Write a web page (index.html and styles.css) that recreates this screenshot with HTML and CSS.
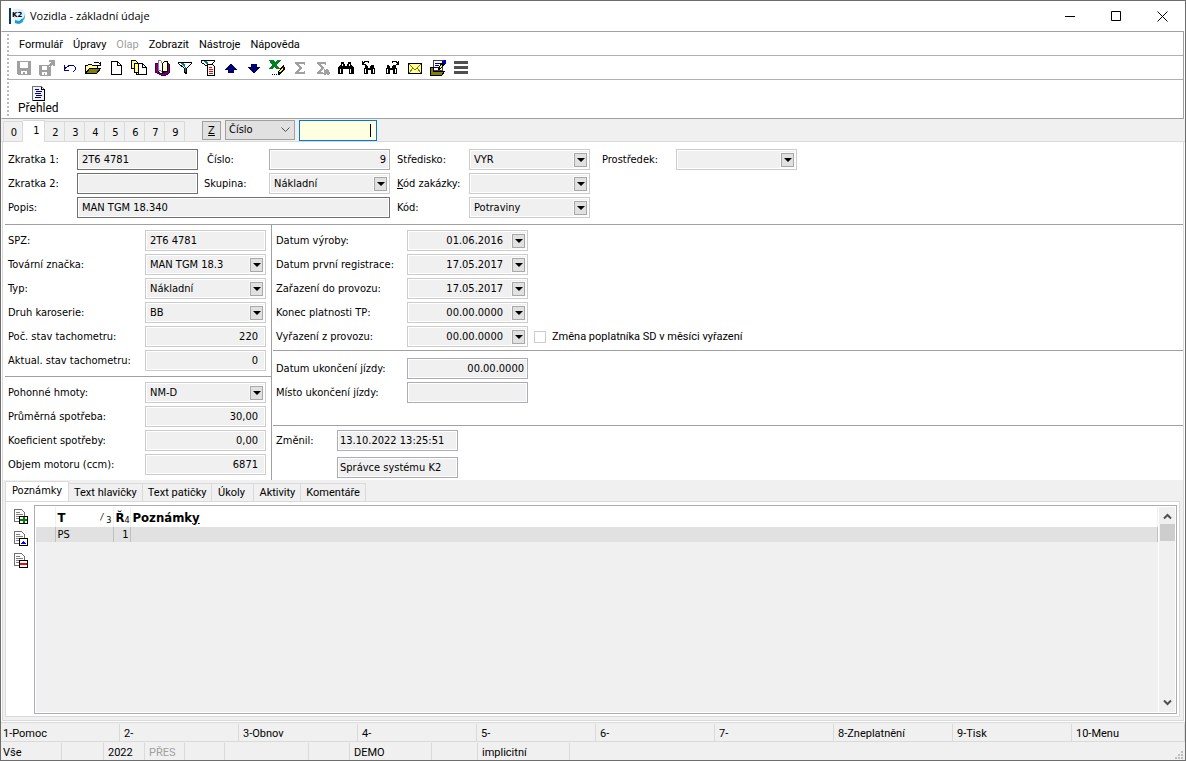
FILE: index.html
```html
<!DOCTYPE html>
<html lang="cs">
<head>
<meta charset="utf-8">
<title>Vozidla - základní údaje</title>
<link rel="stylesheet" href="styles.css">
</head>
<body>
<div class="window">
  <header class="titlebar">
    <svg class="app-icon" width="18" height="18" viewBox="0 0 18 18" aria-hidden="true">
      <path d="M4 2h9l3 4v7l-4 4H5z" fill="#dff1fb"/>
      <path d="M16 6c1 5-2 10-9 11 4-1 5-3 5-5 2 0 4-2 4-6z" fill="#18a8e0"/>
      <path d="M6 13l4 1 3-2 1 3-4 2-4-1z" fill="#1d9fd0"/>
      <path d="M0 1h2v16H0z" fill="#003a70"/>
      <text x="3" y="10" class="app-mark">K2</text>
    </svg>
    <h1 class="title">Vozidla - základní údaje</h1>
    <div class="window-buttons">
      <button type="button" aria-label="Minimalizovat"><svg width="11" height="11" viewBox="0 0 11 11"><path d="M0 5.500h10" stroke="#000"/></svg></button>
      <button type="button" aria-label="Maximalizovat"><svg width="11" height="11" viewBox="0 0 11 11"><path d="M.5.500h9v9h-9z" fill="none" stroke="#000"/></svg></button>
      <button type="button" aria-label="Zavřít"><svg width="11" height="11" viewBox="0 0 11 11"><path d="M.5.500l10 10M10.500.500l-10 10" stroke="#000"/></svg></button>
    </div>
  </header>

  <div class="bars">
    <nav class="bar menubar">
      <button type="button">Formulář</button>
      <button type="button">Úpravy</button>
      <button type="button" disabled>Olap</button>
      <button type="button">Zobrazit</button>
      <button type="button">Nástroje</button>
      <button type="button">Nápověda</button>
    </nav>
    <div class="bar toolbar">
      <button type="button" aria-label="Uložit" disabled><svg viewBox="0 0 16 16"><path d="M1 1h14v14H2l-1-1z" fill="#a0a0a0"/><path d="M4 2h8v6H4zM5 11h6v3H9v-2H7v2H5z" fill="#fff"/></svg></button>
      <button type="button" aria-label="Uložit jako" disabled><svg viewBox="0 0 16 16"><path d="M0 5h10v2h2v9H1l-1-1z" fill="#a0a0a0"/><path d="M3 6h5v4H3zM3 12h5v3H6v-2H5v2H3z" fill="#fff"/><path d="M10 0h6v6h-2V4l-3 3-2-2 3-3h-2z" fill="#a0a0a0"/></svg></button>
      <button type="button" aria-label="Zpět"><svg viewBox="0 0 16 16"><path d="M2 5v5h5M2 9l3-2 3-2h3l2 2v3l-2 2" fill="none" stroke="#000080"/></svg></button>
      <button type="button" aria-label="Otevřít"><svg viewBox="0 0 16 16"><path d="M9 3l2-1h2l2 2M15 2v3h-3" fill="none" stroke="#000"/><path d="M.5 13.500v-8h2l1-1h3l1 1h5v3" fill="#ffffa0" stroke="#000"/><path d="M.5 13.500l4-5h11l-4 5z" fill="#808000" stroke="#000"/></svg></button>
      <button type="button" aria-label="Nový"><svg viewBox="0 0 16 16"><path d="M3.500 1.500h6l4 4v9h-10z" fill="#fff" stroke="#000"/><path d="M9.500 1.500v4h4" fill="none" stroke="#000"/></svg></button>
      <button type="button" aria-label="Kopírovat"><svg viewBox="0 0 16 16"><path d="M.5.500h4l2 2v6h-6z" fill="#ffff80" stroke="#000"/><path d="M3.500 3.500h4l2 2v7h-6z" fill="#ffff80" stroke="#000"/><path d="M5.500 12.500v2h3" fill="none" stroke="#000"/><path d="M7.500 3.500h4l4 4v7h-8z" fill="#fff" stroke="#000"/><path d="M11.500 3.500v4h4" fill="none" stroke="#000"/></svg></button>
      <button type="button" aria-label="Kniha"><svg viewBox="0 0 16 16"><path d="M1 3h3v9l4 2 4-2 2-9 1 1v9l-3 2H7l-6-3z" fill="#800080" stroke="#400040"/><path d="M4.500.500l2 0 2 3v9l-2-2h-2z" fill="#fff" stroke="#808080"/><path d="M8.500 3.500l2-2h3v10h-3l-2 1z" fill="#ffffd0" stroke="#000"/></svg></button>
      <button type="button" aria-label="Filtr"><svg viewBox="0 0 16 16"><path d="M1.500 2.500h13v1l-5 5v5l-2-1v-4l-6-5z" fill="#fff" stroke="#000"/><path d="M3 3h4l2 5v4H8V8z" fill="#008080"/></svg></button>
      <button type="button" aria-label="Filtr dokladu"><svg viewBox="0 0 16 16"><path d="M1.500.500h13v1l-5 5v6l-2-1v-5l-6-4z" fill="#fff" stroke="#000"/><path d="M3 1h4l2 5v4H8V6z" fill="#008080"/><path d="M7.500 4.500h5l2 2v9h-7z" fill="#fff" stroke="#000"/><path d="M9 7h3v1H9zM9 9h4v1H9zM9 11h4v1H9zM9 13h4v1H9z" fill="#f00"/></svg></button>
      <button type="button" aria-label="Předchozí"><svg viewBox="0 0 16 16"><path d="M8 4l7 6h-4v3H5v-3H1z" fill="#000070"/></svg></button>
      <button type="button" aria-label="Další"><svg viewBox="0 0 16 16"><path d="M8 13l7-6h-4V4H5v3H1z" fill="#000070"/></svg></button>
      <button type="button" aria-label="Export do Excelu"><svg viewBox="0 0 16 16"><path d="M0 0h4l2 2 3-2h3L8 5l3 4H7L5 7 3 9H0l3-4z" fill="#008020"/><path d="M15 5l1 4-5 6H9v-3l4-6z" fill="#000"/><path d="M13 8l1 1-3 4-1-1z" fill="#ff0"/><path d="M14 6l1 2-1 0-1-1z" fill="#c00"/><path d="M3 14h1v1H3zM5 14h1v1H5zM7 14h1v1H7z" fill="#000"/></svg></button>
      <button type="button" aria-label="Součet" disabled><svg viewBox="0 0 16 16"><path d="M3 2h10v3h-1l-1-1H6l4 4-4 4h5l1-1h1v3H3v-2l4-4-4-4z" fill="#a0a0a0"/></svg></button>
      <button type="button" aria-label="Součet označených" disabled><svg viewBox="0 0 16 16"><path d="M2 2h9v3h-1L9 4H5l4 4-4 4h3v2H2v-2l4-4-4-4z" fill="#a0a0a0"/><path d="M9 9h1v1l2-2 1 2h1v2l1 1-1 1v1h-2l-1-1-1 1H9l-1-2 1-1z" fill="#a0a0a0"/></svg></button>
      <button type="button" aria-label="Hledat"><svg viewBox="0 0 16 16"><path d="M3 2h3v2h1v2h2V4h1V2h3v2l3 4v6h-5V9H5v5H0V8l3-4z"/><path d="M4 4h1v2H4zM2 9h1v4H2zM11 4h1v2h-1zM12 9h1v4h-1z" fill="#fff"/></svg></button>
      <button type="button" aria-label="Hledat předchozí"><svg viewBox="0 0 16 16"><path d="M4 5h2v1h1v2h2V6h1V5h3v2l1 2v5h-4v-4H7v4H3V9l1-2z"/><path d="M4 9h1v4H4zM12 9h1v4h-1z" fill="#fff"/><path d="M1.500 1v3h3M2 3.500l2-2h3l1 1" fill="none" stroke="#000"/></svg></button>
      <button type="button" aria-label="Hledat další"><svg viewBox="0 0 16 16"><path d="M3 5h2v1h1v2h2V6h1V5h3v2l1 2v5H9v-4H6v4H2V9l1-2z"/><path d="M3 9h1v4H3zM11 9h1v4h-1z" fill="#fff"/><path d="M14.500 1v3h-3M14 3.500l-2-2H9l-1 1" fill="none" stroke="#000"/></svg></button>
      <button type="button" aria-label="Pošta"><svg viewBox="0 0 16 16"><path d="M1.500 3.500h13v10h-13z" fill="#ffffa0" stroke="#000"/><path d="M2 4l6 6 6-6M2 13l4-5M14 13l-4-5" fill="none" stroke="#808000"/></svg></button>
      <button type="button" aria-label="Úpravy dokladu"><svg viewBox="0 0 16 16"><path d="M3.500.500h9v10h-9z" fill="#fff" stroke="#404040"/><path d="M5 3h6v1H5zM5 5h4v1H5zM4 7h5v1H4z" fill="#0000a0"/><path d="M.5 15.500v-8h3v4h9l2 0-3 4z" fill="#808000" stroke="#000"/><path d="M13 0h3v3l-5 6-3 1 1-3z" fill="#000"/><path d="M13 0h3v3l-1 1-3-2z" fill="#0000d0"/><path d="M11 5l1 1-2 2-1-1z" fill="#ff0"/></svg></button>
      <button type="button" aria-label="Nabídka"><svg viewBox="0 0 16 16"><path d="M1 1h14v3H1zM1 6h14v3H1zM1 11h14v3H1z" fill="#505050"/></svg></button>
    </div>
    <div class="bar viewbar">
      <button type="button" class="overview">
        <svg viewBox="0 0 16 16"><path d="M2.500.500h9l3 3v11h-12z" fill="#f0f0f0" stroke="#707070"/><path d="M11.500.500v3h3v11h-12" fill="none" stroke="#000"/><path d="M5 3h4v1H5zM6 5h6v1H6zM5 7h6v1H5zM6 9h6v1H6zM5 11h6v1H5z" fill="#000080"/></svg>
        <span>Přehled</span>
      </button>
    </div>
  </div>

  <div class="pages">
    <div class="page-tabs" role="tablist">
      <button type="button" role="tab">0</button>
      <button type="button" role="tab" aria-selected="true">1</button>
      <button type="button" role="tab">2</button>
      <button type="button" role="tab">3</button>
      <button type="button" role="tab">4</button>
      <button type="button" role="tab">5</button>
      <button type="button" role="tab">6</button>
      <button type="button" role="tab">7</button>
      <button type="button" role="tab">9</button>
    </div>
    <button type="button" class="order"><u>Z</u></button>
    <div class="order-by">
      <select aria-label="Třídění"><option>Číslo</option></select>
      <svg width="9" height="6" viewBox="0 0 9 6" aria-hidden="true"><path d="M.5.500l4 4 4-4" fill="none" stroke="#505050"/></svg>
    </div>
    <div class="search"><input type="text" aria-label="Hledaná hodnota"></div>
  </div>

  <main class="sheet">
    <section class="head-fields">
      <label class="c1" for="zk1">Zkratka 1:</label>
      <input class="field strong" id="zk1" value="2T6 4781" readonly>
      <label class="c2 inset" for="cislo">Číslo:</label>
      <input class="field medium number edge" id="cislo" value="9" readonly>
      <label class="c3" for="stred">Středisko:</label>
      <div class="combo"><select id="stred"><option>VYR</option></select><span class="drop"></span></div>
      <label class="c4" for="prostr">Prostředek:</label>
      <div class="combo"><select id="prostr"><option></option></select><span class="drop"></span></div>

      <label class="c1" for="zk2">Zkratka 2:</label>
      <input class="field strong" id="zk2" value="" readonly>
      <label class="c2" for="skup">Skupina:</label>
      <div class="combo"><select id="skup"><option>Nákladní</option></select><span class="drop"></span></div>
      <label class="c3" for="zak"><u>K</u>ód zakázky:</label>
      <div class="combo"><select id="zak"><option></option></select><span class="drop"></span></div>

      <label class="c1" for="popis">Popis:</label>
      <input class="field strong wide" id="popis" value="MAN TGM 18.340" readonly>
      <label class="c3" for="kod">Kód:</label>
      <div class="combo"><select id="kod"><option>Potraviny</option></select><span class="drop"></span></div>
    </section>

    <div class="details">
      <div class="left">
        <section class="rows">
          <label for="spz">SPZ:</label>
          <input class="field" id="spz" value="2T6 4781" readonly>
          <label for="znacka">Tovární značka:</label>
          <div class="combo"><select id="znacka"><option>MAN TGM 18.3</option></select><span class="drop"></span></div>
          <label for="typ">Typ:</label>
          <div class="combo"><select id="typ"><option>Nákladní</option></select><span class="drop"></span></div>
          <label for="druh">Druh karoserie:</label>
          <div class="combo"><select id="druh"><option>BB</option></select><span class="drop"></span></div>
          <label for="poc">Poč. stav tachometru:</label>
          <input class="field number" id="poc" value="220" readonly>
          <label for="akt">Aktual. stav tachometru:</label>
          <input class="field number" id="akt" value="0" readonly>
        </section>
        <section class="rows fuel">
          <label for="phm">Pohonné hmoty:</label>
          <div class="combo"><select id="phm"><option>NM-D</option></select><span class="drop"></span></div>
          <label for="prum">Průměrná spotřeba:</label>
          <input class="field number" id="prum" value="30,00" readonly>
          <label for="koef">Koeficient spotřeby:</label>
          <input class="field number" id="koef" value="0,00" readonly>
          <label for="objem">Objem motoru (ccm):</label>
          <input class="field number" id="objem" value="6871" readonly>
        </section>
      </div>
      <div class="right">
        <section class="rows dates">
          <label for="d1">Datum výroby:</label>
          <div class="combo"><input class="date" id="d1" value="01.06.2016" readonly><button type="button" class="drop" aria-label="Kalendář"></button></div>
          <label for="d2">Datum první registrace:</label>
          <div class="combo"><input class="date" id="d2" value="17.05.2017" readonly><button type="button" class="drop" aria-label="Kalendář"></button></div>
          <label for="d3">Zařazení do provozu:</label>
          <div class="combo"><input class="date" id="d3" value="17.05.2017" readonly><button type="button" class="drop" aria-label="Kalendář"></button></div>
          <label for="d4">Konec platnosti TP:</label>
          <div class="combo"><input class="date" id="d4" value="00.00.0000" readonly><button type="button" class="drop" aria-label="Kalendář"></button></div>
          <label for="d5">Vyřazení z provozu:</label>
          <div class="combo"><input class="date" id="d5" value="00.00.0000" readonly><button type="button" class="drop" aria-label="Kalendář"></button></div>
          <label class="check"><input type="checkbox" disabled><span>Změna poplatníka SD v měsíci vyřazení</span></label>
        </section>
        <section class="rows trip">
          <label for="uj">Datum ukončení jízdy:</label>
          <input class="field medium number edge" id="uj" value="00.00.0000" readonly>
          <label for="mj">Místo ukončení jízdy:</label>
          <input class="field medium" id="mj" value="" readonly>
        </section>
        <section class="rows changed">
          <label for="zm">Změnil:</label>
          <div class="stack">
            <input class="field medium tight" id="zm" value="13.10.2022 13:25:51" readonly>
            <input class="field medium tight" aria-label="Změnil uživatel" value="Správce systému K2" readonly>
          </div>
        </section>
      </div>
    </div>

    <section class="notes">
      <div class="note-tabs" role="tablist">
        <button type="button" role="tab" aria-selected="true">Poznámky</button>
        <button type="button" role="tab">Text hlavičky</button>
        <button type="button" role="tab">Text patičky</button>
        <button type="button" role="tab" class="short">Úkoly</button>
        <button type="button" role="tab">Aktivity</button>
        <button type="button" role="tab">Komentáře</button>
      </div>
      <div class="note-page">
        <div class="note-tools">
          <button type="button" aria-label="Přidat"><svg viewBox="0 0 16 16"><path d="M1.500.500h7l3 3v9h-10z" fill="#fff" stroke="#707070"/><path d="M3 3.500h4M3 5.500h7M3 7.500h7M3 9.500h4" stroke="#808080"/><path d="M6.500 7.500h8v7h-8z" fill="#fff" stroke="#000"/><path d="M10.500 8v6M7 11h7" stroke="#008000" stroke-width="2"/></svg></button>
          <button type="button" aria-label="Změnit"><svg viewBox="0 0 16 16"><path d="M1.500.500h7l3 3v9h-10z" fill="#fff" stroke="#707070"/><path d="M3 3.500h4M3 5.500h7M3 7.500h7M3 9.500h4" stroke="#808080"/><path d="M6.500 7.500h8v7h-8z" fill="#fff" stroke="#000"/><path d="M8 13v-1h1v-1h1v-1h1v1h1v1h1v1z" fill="#00f"/></svg></button>
          <button type="button" aria-label="Odebrat"><svg viewBox="0 0 16 16"><path d="M1.500.500h7l3 3v9h-10z" fill="#fff" stroke="#707070"/><path d="M3 3.500h4M3 5.500h7M3 7.500h7M3 9.500h4" stroke="#808080"/><path d="M6.500 7.500h8v7h-8z" fill="#fff" stroke="#000"/><path d="M7 11h7" stroke="#f00" stroke-width="2"/></svg></button>
        </div>
        <div class="grid-box">
          <div class="grid-area">
            <table>
              <colgroup><col class="col-mark"><col class="col-type"><col class="col-row"><col></colgroup>
              <thead><tr>
                <th></th>
                <th><div class="th"><span>T</span><span class="sort"><i>/</i><sub>3</sub></span></div></th>
                <th><div class="th"><span>Ř</span><sub>4</sub></div></th>
                <th>Poznámk<u>y</u></th>
              </tr></thead>
              <tbody><tr><td></td><td>PS</td><td class="num">1</td><td></td></tr></tbody>
            </table>
          </div>
          <div class="scrollbar" aria-hidden="true">
            <svg width="9" height="7" viewBox="0 0 9 7"><path d="M1 5.500l3.500-3.500L8 5.500" fill="none" stroke="#505050" stroke-width="2"/></svg>
            <div class="thumb"></div>
            <svg width="9" height="7" viewBox="0 0 9 7"><path d="M1 1.500L4.500 5 8 1.500" fill="none" stroke="#505050" stroke-width="2"/></svg>
          </div>
        </div>
      </div>
    </section>
  </main>

  <footer class="status">
    <div class="keys">
      <span>1-Pomoc</span><span>2-</span><span>3-Obnov</span><span>4-</span><span>5-</span><span>6-</span><span>7-</span><span>8-Zneplatnění</span><span>9-Tisk</span><span>10-Menu</span>
    </div>
    <div class="info">
      <span>Vše</span><span></span><span>2022</span><span class="off">PŘES</span><span></span><span></span><span></span><span>DEMO</span><span></span><span>implicitní</span><span></span>
      <svg class="grip" width="9" height="9" viewBox="0 0 9 9" aria-hidden="true"><path d="M6 0h2v2H6zM3 3h2v2H3zM6 3h2v2H6zM0 6h2v2H0zM3 6h2v2H3zM6 6h2v2H6z" fill="#bfbfbf"/></svg>
    </div>
  </footer>
</div>
</body>
</html>
```
FILE: styles.css
```css
* { box-sizing: border-box; }

:root {
  --face: #f0f0f0;
  --line: #dadada;
  --rule: #a0a0a0;
  --form: "DejaVu Sans Condensed", "DejaVu Sans", sans-serif;
  --menu: Roboto, "Liberation Sans", sans-serif;
}

body {
  margin: 0;
  font: 11px/16px var(--form);
  color: #000;
}

button, input, select {
  margin: 0;
  padding: 0;
  border: 0;
  border-radius: 0;
  background: none;
  font: inherit;
  color: inherit;
  outline: none;
}

input, select { min-width: 0; }

.window {
  display: flex;
  flex-direction: column;
  min-height: 100vh;
  border: 1px solid #6d6d6d;
  background: #fff;
}

/* Title bar */
.titlebar {
  display: flex;
  align-items: center;
  height: 30px;
  padding-left: 8px;
}
.app-icon { margin-right: 3px; }
.app-mark { font: bold 7px "DejaVu Sans", sans-serif; }
.title {
  flex: 1;
  margin: 0;
  font: 11px/16px "Open Sans", "Noto Sans", sans-serif;
}
.window-buttons { display: flex; }
.window-buttons button { width: 46px; height: 28px; }
.window-buttons svg { display: block; margin: 0 auto; }

/* Menu and tool bars */
.bars {
  margin: 0 1px 0 0;
  border: 1px solid var(--rule);
  border-left-color: #fff;
}
.bar {
  display: flex;
  align-items: center;
  height: 24px;
  margin-left: 5px;
  padding-left: 5px;
  background: repeating-linear-gradient(#bbb 0 2px, #fff 2px 4px) 0 2px / 2px 100% no-repeat;
}
.bar + .bar { border-top: 1px solid #b0b0b0; }
.menubar {
  gap: 10px;
  height: 23px;
  padding: 3px 0 0 12px;
  font-family: var(--menu);
}
.menubar button:disabled { color: #a0a0a0; }
.toolbar button { width: 23px; height: 20px; }
.bar svg {
  display: block;
  width: 16px;
  height: 16px;
  margin: 0 auto;
  shape-rendering: crispEdges;
}
.bar.viewbar { height: 39px; }
.overview {
  display: flex;
  flex-direction: column;
  align-items: center;
  padding: 3px 6px 0;
  font: 12px/13px var(--menu);
}

/* Page tabs */
.pages {
  display: flex;
  align-items: flex-end;
  height: 23px;
  padding: 0 0 0 2px;
  border-bottom: 1px solid var(--line);
  background: var(--face);
}
.page-tabs { display: flex; align-items: flex-end; margin-right: 17px; }
.page-tabs button {
  width: 20px;
  height: 20px;
  padding: 2px 0 0 2px;
  border: 1px solid var(--line);
  border-width: 1px 1px 0 0;
}
.page-tabs button:first-child { border-left-width: 1px; }
.page-tabs button[aria-selected] {
  width: 22px;
  height: 22px;
  margin-bottom: -1px;
  padding: 0 0 1px 6px;
  background: #fff;
}
.order {
  width: 19px;
  height: 19px;
  margin: 0 4px 1px 0;
  border: 1px solid var(--rule);
  background: #e1e1e1;
}
.order-by {
  display: flex;
  align-items: center;
  width: 70px;
  height: 20px;
  margin: 0 4px 1px 0;
  padding: 0 4px 0 3px;
  border: 1px solid var(--rule);
  background: #e1e1e1;
}
.order-by select { flex: 1; appearance: none; }
.search {
  display: flex;
  align-items: center;
  width: 78px;
  height: 21px;
  padding-right: 5px;
  border: 1px solid #0078d7;
  background: #ffffe1;
}
.search input { flex: 1; text-align: right; }
.search::after { content: ""; width: 1px; height: 13px; background: #000; }

/* Form */
.sheet {
  display: flex;
  flex: 1;
  flex-direction: column;
  margin: 0 1px;
  border: 1px solid var(--line);
  border-top: 0;
}
label { white-space: nowrap; line-height: 21px; }

.field, .combo {
  width: 100%;
  height: 21px;
  border: 1px solid #ccc;
  background: var(--face);
  box-shadow: inset 0 0 0 1px #fff;
}
.field { padding: 0 7px 1px 4px; }
.number { text-align: right; }
.edge { padding-right: 3px; }
.tight { padding-left: 2px; }
.strong { border-color: #707070; }
.medium { border-color: #abadb3; }

.combo { display: flex; align-items: center; padding: 1px 2px 1px 4px; }
.combo select { flex: 1; height: 17px; appearance: none; }
.date { flex: 1; height: 17px; padding: 0 8px 1px 0; text-align: right; }
.drop {
  display: flex;
  align-items: center;
  justify-content: center;
  width: 13px;
  height: 14px;
  margin-left: 1px;
  border: 1px solid #a8a8a8;
  background: #e1e1e1;
  outline: 1px solid #fafafa;
}
.drop::after {
  content: "";
  border: 4px solid transparent;
  border-top-color: #000;
  border-bottom: 0;
}

.head-fields {
  display: grid;
  grid-template-columns: 69px 121px 71px 121px 79px 121px 86px 121px;
  row-gap: 3px;
  margin: 0 0 0 2px;
  padding: 7px 0 6px 3px;
  border-bottom: 1px solid var(--rule);
}
.c1 { grid-column: 1; }
.c2 { padding-left: 6px; }
.c2.inset { padding-left: 9px; }
.c3 { padding-left: 7px; }
.c4 { padding-left: 12px; }
.wide { grid-column: 2 / 5; }

.details { display: flex; margin-left: 2px; }
.left { width: 267px; padding-bottom: 5px; border-right: 1px solid var(--rule); }
.right { flex: 1; }
.rows {
  display: grid;
  grid-template-columns: 137px 121px;
  row-gap: 3px;
  padding: 5px 0 5px 3px;
}
.fuel { border-top: 1px solid var(--rule); padding-bottom: 0; }
.dates, .trip { grid-template-columns: 131px 121px 1fr; padding-left: 4px; }
.dates { padding-bottom: 3px; }
.trip { margin-left: 1px; padding: 7px 0 22px 3px; border-top: 1px solid var(--rule); }
.trip .field { grid-column: 2; }
.trip label { grid-column: 1; }
.dates .combo { grid-column: 2; }
.dates > label:not(.check) { grid-column: 1; }
.dates .check { grid-column: 3; }
.check {
  display: flex;
  align-items: center;
  gap: 6px;
  padding-left: 6px;
  font-family: var(--menu);
}
.check input {
  width: 12px;
  height: 12px;
  border: 1px solid #ccc;
  background: #fff;
  appearance: none;
}
.changed {
  grid-template-columns: 61px 121px;
  margin-left: 1px;
  padding: 4px 0 0 3px;
  border-top: 1px solid var(--rule);
}
.stack { display: grid; gap: 6px; }

/* Notes */
.notes {
  display: flex;
  flex: 1;
  flex-direction: column;
  padding: 1px 3px 3px 2px;
  background: var(--face);
}
.note-tabs { display: flex; align-items: flex-end; height: 20px; font-family: var(--menu); }
.note-tabs button {
  height: 18px;
  padding: 0 5px;
  border: 1px solid var(--line);
  border-width: 1px 1px 0 0;
}
.note-tabs .short { width: 42px; padding-right: 8px; }
.note-tabs button[aria-selected] {
  height: 21px;
  margin-bottom: -1px;
  padding: 0 6px 3px;
  border-left-width: 1px;
  background: #fff;
  font-family: var(--form);
}
.note-page {
  display: flex;
  flex: 1;
  padding: 3px 2px 2px 6px;
  border: 1px solid var(--line);
  background: #fff;
}
.note-tools { display: flex; flex-direction: column; gap: 6px; width: 22px; padding: 4px 0 0 1px; }
.note-tools button { width: 16px; height: 16px; }
.note-tools svg { display: block; width: 16px; height: 16px; shape-rendering: crispEdges; }
.grid-box {
  display: flex;
  flex: 1;
  padding: 1px;
  border: 1px solid #abadb3;
}
.grid-area { flex: 1; background: var(--face); }
table { width: 100%; border-collapse: collapse; table-layout: fixed; }
th, td { padding: 0 1px 0 2px; text-align: left; line-height: 15px; height: 15px; }
th { height: 20px; background: #fff; font-size: 13px; border-right: 1px solid #f0f0f0; }
td { background: #e1e1e1; border-right: 1px solid #c0c0c0; }
.col-mark { width: 19px; }
.col-type { width: 58px; }
.col-row { width: 17px; }
.num { text-align: right; }
.th { display: flex; justify-content: space-between; }
.th sub { height: 15px; font: 9px/20px var(--form); vertical-align: baseline; }
.sort { display: flex; gap: 3px; height: 15px; font-weight: normal; }
.sort i { font-size: 9px; }
.scrollbar {
  display: flex;
  flex-direction: column;
  align-items: center;
  width: 17px;
  padding: 6px 1px;
  border-left: 1px solid #fff;
  background: var(--face);
}
.thumb { width: 15px; height: 17px; margin: 4px 0 auto; background: #cdcdcd; }

/* Status bar */
.status { margin-top: 1px; background: var(--face); font-family: var(--menu); }
.keys, .info { display: grid; border-top: 1px solid var(--line); padding-top: 1px; }
.keys { grid-template-columns: repeat(9, 119fr) 113fr; height: 19px; }
.info {
  position: relative;
  grid-template-columns: 61px 42px 41px 40px 40px 84px 41px 82px 46px 92px 1fr;
  height: 19px;
}
.status span {
  height: 17px;
  padding: 2px 0 0 4px;
  border-right: 1px solid var(--line);
  line-height: 16px;
  white-space: nowrap;
}
.status span:first-child { padding-left: 2px; }
.info span:last-of-type { border-right: 0; }
.off { color: #a0a0a0; }
.grip { position: absolute; right: 1px; bottom: 0; }
```
